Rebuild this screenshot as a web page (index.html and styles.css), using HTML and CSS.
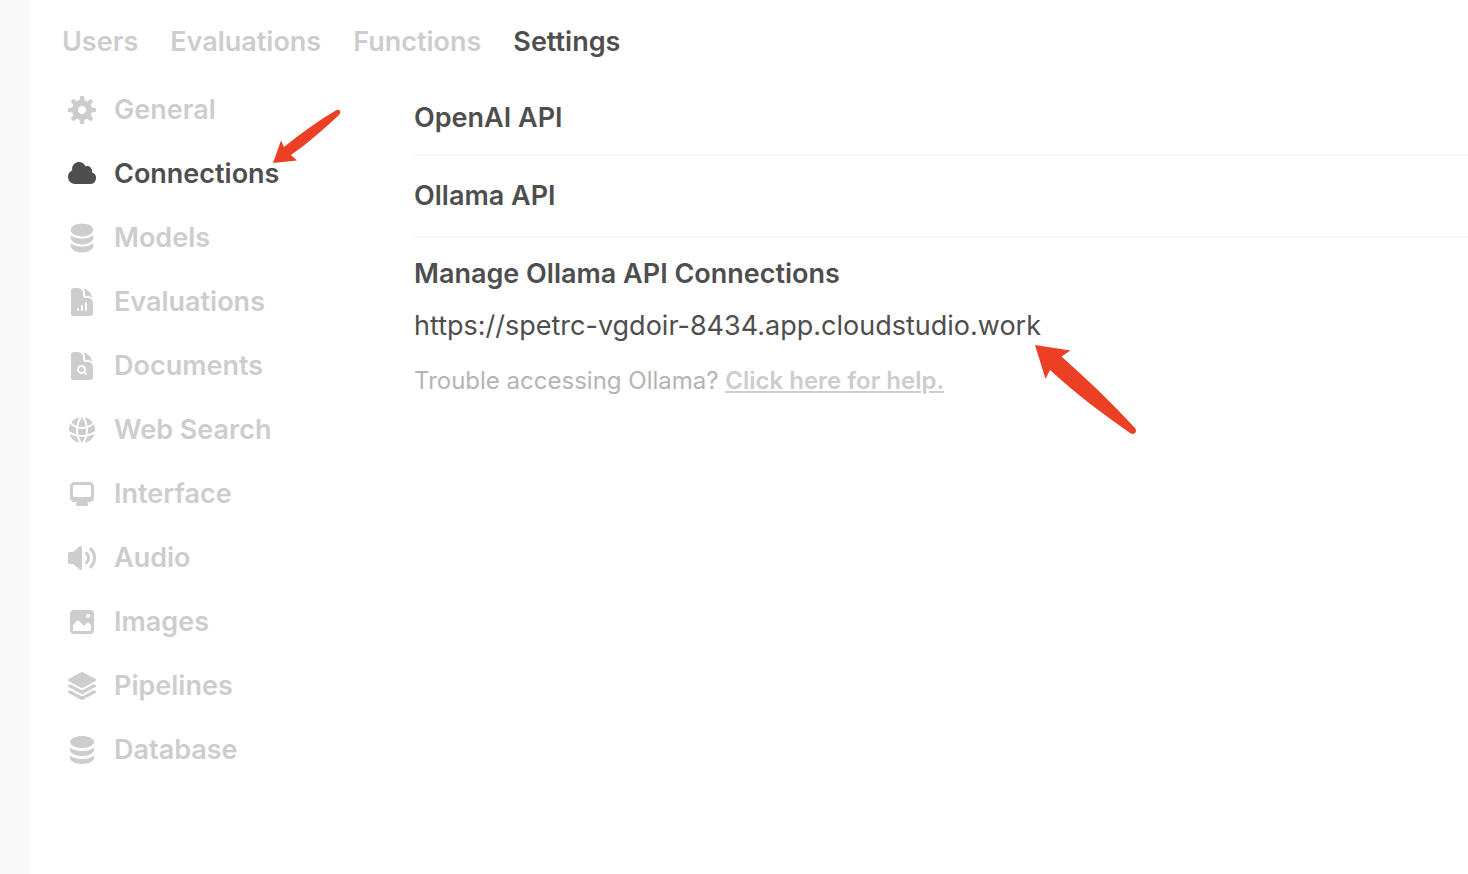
FILE: index.html
```html
<!DOCTYPE html>
<html lang="en">
<head>
    <meta charset="UTF-8">
    <meta name="viewport" content="width=device-width, initial-scale=1.0">
    <title>Admin Settings</title>
    <link rel="stylesheet" href="styles.css">
</head>
<body>
    <div class="sidebar"></div>
    <div class="page">
        <nav class="tabs">
            <a href="#users">Users</a>
            <a href="#evaluations">Evaluations</a>
            <a href="#functions">Functions</a>
            <a href="#settings" class="active">Settings</a>
        </nav>
        <div class="content">
            <div class="menu">
                <button type="button">
                    <svg viewBox="0 0 16 16"><path fill-rule="evenodd" d="M6.955 1.45A.5.5 0 0 1 7.452 1h1.096a.5.5 0 0 1 .497.45l.17 1.699c.484.12.94.312 1.356.562l1.321-1.081a.5.5 0 0 1 .67.033l.774.775a.5.5 0 0 1 .034.67l-1.08 1.32c.25.417.44.873.561 1.357l1.699.17a.5.5 0 0 1 .45.497v1.096a.5.5 0 0 1-.45.497l-1.699.17c-.12.484-.312.94-.562 1.356l1.082 1.322a.5.5 0 0 1-.034.67l-.774.774a.5.5 0 0 1-.67.033l-1.322-1.08c-.416.25-.872.44-1.356.561l-.17 1.699a.5.5 0 0 1-.497.45H7.452a.5.5 0 0 1-.497-.45l-.17-1.699a4.973 4.973 0 0 1-1.356-.562L4.108 13.37a.5.5 0 0 1-.67-.033l-.774-.775a.5.5 0 0 1-.034-.67l1.08-1.32a4.971 4.971 0 0 1-.561-1.357l-1.699-.17A.5.5 0 0 1 1 8.548V7.452a.5.5 0 0 1 .45-.497l1.699-.17c.12-.484.312-.94.562-1.356L2.629 4.107a.5.5 0 0 1 .034-.67l.774-.774a.5.5 0 0 1 .67-.033L5.43 3.71a4.97 4.97 0 0 1 1.356-.561l.17-1.699ZM6 8c0 .538.212 1.026.558 1.385l.057.057a2 2 0 0 0 2.828-2.828l-.058-.056A2 2 0 0 0 6 8Z"/></svg>
                    General
                </button>
                <button type="button" class="active">
                    <svg viewBox="0 0 16 16"><path d="M1 9.5A3.5 3.5 0 0 0 4.5 13H12a3 3 0 0 0 .917-5.857 2.503 2.503 0 0 0-3.198-3.019 3.5 3.5 0 0 0-6.628 2.171A3.5 3.5 0 0 0 1 9.5Z"/></svg>
                    Connections
                    <svg class="arrow arrow-menu" viewBox="0 0 70 56"><path d="M1 54 9 31.500 12 38C28 25 46 12 64.500 1Q67 0 68 2T67 6C52 20 36 34 19 46L25 51.500Z"/></svg>
                </button>
                <button type="button">
                    <svg viewBox="0 0 20 20"><path d="M10 1c3.866 0 7 1.790 7 4s-3.134 4-7 4-7-1.790-7-4 3.134-4 7-4zm5.694 8.130c.464-.264.910-.583 1.306-.952V10c0 2.210-3.134 4-7 4s-7-1.790-7-4V8.178c.396.370.842.688 1.306.953C5.838 10.006 7.854 10.500 10 10.500s4.162-.494 5.694-1.370zM3 13.179V15c0 2.210 3.134 4 7 4s7-1.790 7-4v-1.822c-.396.370-.842.688-1.306.953-1.532.875-3.548 1.369-5.694 1.369s-4.162-.494-5.694-1.370A7.009 7.009 0 0 1 3 13.179z"/></svg>
                    Models
                </button>
                <button type="button">
                    <svg viewBox="0 0 24 24"><path fill-rule="evenodd" d="M5.625 1.500H9a3.750 3.750 0 0 1 3.750 3.750v1.875c0 1.036.840 1.875 1.875 1.875H16.500a3.750 3.750 0 0 1 3.750 3.750v7.875c0 1.035-.840 1.875-1.875 1.875H5.625a1.875 1.875 0 0 1-1.875-1.875V3.375c0-1.036.840-1.875 1.875-1.875ZM9.750 17.250a.75.75 0 0 0-1.500 0V18a.75.75 0 0 0 1.500 0v-.75Zm2.250-3a.75.75 0 0 1 .75.75v3a.75.75 0 0 1-1.500 0v-3a.75.75 0 0 1 .75-.75Zm3.750-1.500a.75.75 0 0 0-1.500 0V18a.75.75 0 0 0 1.500 0v-5.250Z"/><path d="M14.250 5.250a5.230 5.230 0 0 0-1.279-3.434 9.768 9.768 0 0 1 6.963 6.963A5.230 5.230 0 0 0 16.500 7.500h-1.875a.375.375 0 0 1-.375-.375V5.250Z"/></svg>
                    Evaluations
                </button>
                <button type="button">
                    <svg viewBox="0 0 24 24"><path fill-rule="evenodd" d="M5.625 1.500H9a3.750 3.750 0 0 1 3.750 3.750v1.875c0 1.036.840 1.875 1.875 1.875H16.500a3.750 3.750 0 0 1 3.750 3.750v7.875c0 1.035-.840 1.875-1.875 1.875H5.625a1.875 1.875 0 0 1-1.875-1.875V3.375c0-1.036.840-1.875 1.875-1.875ZM11.625 18c.660 0 1.277-.190 1.797-.518l1.048 1.048a.75.75 0 0 0 1.060-1.060l-1.047-1.048A3.375 3.375 0 1 0 11.625 18ZM11.625 16.500a1.875 1.875 0 1 0 0-3.750 1.875 1.875 0 0 0 0 3.750Z"/><path d="M14.250 5.250a5.230 5.230 0 0 0-1.279-3.434 9.768 9.768 0 0 1 6.963 6.963A5.230 5.230 0 0 0 16.500 7.500h-1.875a.375.375 0 0 1-.375-.375V5.250Z"/></svg>
                    Documents
                </button>
                <button type="button">
                    <svg viewBox="0 0 24 24"><path d="M21.721 12.752a9.711 9.711 0 0 0-.945-5.003 12.754 12.754 0 0 1-4.339 2.708 18.991 18.991 0 0 1-.214 4.772 17.165 17.165 0 0 0 5.498-2.477ZM14.634 15.550a17.324 17.324 0 0 0 .332-4.647c-.952.227-1.945.347-2.966.347-1.021 0-2.014-.120-2.966-.347a17.515 17.515 0 0 0 .332 4.647 17.385 17.385 0 0 0 5.268 0ZM9.772 17.119a18.963 18.963 0 0 0 4.456 0A17.182 17.182 0 0 1 12 21.724a17.180 17.180 0 0 1-2.228-4.605ZM7.777 15.230a18.870 18.870 0 0 1-.214-4.774 12.753 12.753 0 0 1-4.340-2.708 9.711 9.711 0 0 0-.944 5.004 17.165 17.165 0 0 0 5.498 2.477ZM21.356 14.752a9.765 9.765 0 0 1-7.478 6.817 18.640 18.640 0 0 0 1.988-4.718 18.627 18.627 0 0 0 5.490-2.098ZM2.644 14.752c1.682.971 3.530 1.688 5.490 2.099a18.640 18.640 0 0 0 1.988 4.718 9.765 9.765 0 0 1-7.478-6.816ZM13.878 2.430a9.755 9.755 0 0 1 6.116 3.986 11.267 11.267 0 0 1-3.746 2.504 18.630 18.630 0 0 0-2.370-6.490ZM12 2.276a17.152 17.152 0 0 1 2.805 7.121c-.897.230-1.837.353-2.805.353-.968 0-1.908-.122-2.805-.353A17.151 17.151 0 0 1 12 2.276ZM10.122 2.430a18.629 18.629 0 0 0-2.370 6.490 11.266 11.266 0 0 1-3.746-2.504 9.754 9.754 0 0 1 6.116-3.985Z"/></svg>
                    Web Search
                </button>
                <button type="button">
                    <svg viewBox="0 0 16 16"><path fill-rule="evenodd" d="M2 4.250A2.250 2.250 0 0 1 4.250 2h7.500A2.250 2.250 0 0 1 14 4.250v5.500A2.250 2.250 0 0 1 11.750 12h-1.312c.1.128.210.248.328.360a.75.75 0 0 1 .234.545v.345a.75.75 0 0 1-.75.75h-4.500a.75.75 0 0 1-.75-.75v-.345a.75.75 0 0 1 .234-.545c.118-.111.228-.232.328-.360H4.250A2.250 2.250 0 0 1 2 9.750v-5.500Zm2.250-.75a.75.75 0 0 0-.75.75v4.500c0 .414.336.75.75.75h7.500a.75.75 0 0 0 .75-.75v-4.500a.75.75 0 0 0-.75-.75h-7.500Z"/></svg>
                    Interface
                </button>
                <button type="button">
                    <svg viewBox="0 0 16 16"><path d="M7.557 2.066A.75.75 0 0 1 8 2.750v10.500a.75.75 0 0 1-1.248.560L3.590 11H2a1 1 0 0 1-1-1V6a1 1 0 0 1 1-1h1.590l3.162-2.810a.75.75 0 0 1 .805-.124ZM12.950 3.050a.75.75 0 1 0-1.060 1.060 5.500 5.500 0 0 1 0 7.780.75.75 0 1 0 1.060 1.060 7 7 0 0 0 0-9.900Z"/><path d="M10.828 5.172a.75.75 0 1 0-1.060 1.060 2.500 2.500 0 0 1 0 3.536.75.75 0 1 0 1.060 1.060 4 4 0 0 0 0-5.656Z"/></svg>
                    Audio
                </button>
                <button type="button">
                    <svg viewBox="0 0 16 16"><path fill-rule="evenodd" d="M2 4a2 2 0 0 1 2-2h8a2 2 0 0 1 2 2v8a2 2 0 0 1-2 2H4a2 2 0 0 1-2-2V4Zm10.500 5.707a.5.5 0 0 0-.146-.353l-1-1a.5.5 0 0 0-.708 0L9.354 9.646a.5.5 0 0 1-.708 0L6.354 7.354a.5.5 0 0 0-.708 0l-2 2a.5.5 0 0 0-.146.353V12a.5.5 0 0 0 .5.5h8a.5.5 0 0 0 .5-.5V9.707ZM12 5a1 1 0 1 1-2 0 1 1 0 0 1 2 0Z"/></svg>
                    Images
                </button>
                <button type="button">
                    <svg viewBox="0 0 24 24"><path d="M11.644 1.590a.75.75 0 0 1 .712 0l9.750 5.250a.75.75 0 0 1 0 1.320l-9.750 5.250a.75.75 0 0 1-.712 0l-9.750-5.250a.75.75 0 0 1 0-1.320l9.750-5.250Z"/><path d="m3.265 10.602 7.668 4.129a2.250 2.250 0 0 0 2.134 0l7.668-4.130 1.370.739a.75.75 0 0 1 0 1.320l-9.750 5.250a.75.75 0 0 1-.710 0l-9.750-5.250a.75.75 0 0 1 0-1.320l1.370-.738Z"/><path d="m10.933 19.231-7.668-4.130-1.370.739a.75.75 0 0 0 0 1.320l9.750 5.250c.221.120.489.120.710 0l9.750-5.250a.75.75 0 0 0 0-1.320l-1.370-.738-7.668 4.130a2.250 2.250 0 0 1-2.134-.001Z"/></svg>
                    Pipelines
                </button>
                <button type="button">
                    <svg viewBox="0 0 16 16"><path d="M8 7c3.314 0 6-1.343 6-3s-2.686-3-6-3-6 1.343-6 3 2.686 3 6 3Z"/><path d="M8 8.500c1.840 0 3.579-.370 4.914-1.037A6.330 6.330 0 0 0 14 6.780V8c0 1.657-2.686 3-6 3S2 9.657 2 8V6.780c.346.273.720.5 1.087.683C4.420 8.131 6.160 8.500 8 8.500Z"/><path d="M8 12.500c1.840 0 3.579-.370 4.914-1.037.366-.183.740-.410 1.086-.684V12c0 1.657-2.686 3-6 3s-6-1.343-6-3v-1.220c.346.273.720.5 1.087.683C4.420 12.131 6.160 12.500 8 12.500Z"/></svg>
                    Database
                </button>
            </div>
            <main class="panel">
                <h2 class="section">OpenAI API</h2>
                <h2 class="section last">Ollama API</h2>
                <h2>Manage Ollama API Connections</h2>
                <div class="url">
                    <span>https://spetrc-vgdoir-8434.app.cloudstudio.work</span>
                    <svg class="arrow arrow-url" viewBox="0 0 104 92"><path d="M1 1 36.500 6.500 27.500 12.500C53 35 78 59 101 84Q103 87 101 89T96 89C69 70 42 50 16 26L11.500 35Z"/></svg>
                </div>
                <p class="help">Trouble accessing Ollama? <a href="#help">Click here for help.</a></p>
            </main>
        </div>
    </div>
</body>
</html>
```

FILE: styles.css
```css
* {
    box-sizing: border-box;
}
body {
    font-family: Inter, "Liberation Sans", sans-serif;
    font-size: 27px;
    font-weight: 600;
    line-height: 40px;
    color: #4e4e4e;
    background: #fff;
    margin: 0;
    display: flex;
    min-height: 100vh;
}
.sidebar {
    width: 30px;
    flex-shrink: 0;
    background: #f9f9f9;
}
.page {
    flex: 1;
    min-width: 0;
    padding: 22px 0 0 32px;
}
.tabs {
    display: flex;
    gap: 32px;
}
.tabs a {
    color: #cdcdcd;
    text-decoration: none;
}
.tabs a.active {
    color: #4e4e4e;
}
.content {
    display: flex;
    padding-top: 16px;
}
.menu {
    width: 352px;
    flex-shrink: 0;
    display: flex;
    flex-direction: column;
    align-items: flex-start;
}
.menu button {
    position: relative;
    display: flex;
    align-items: center;
    gap: 16px;
    height: 64px;
    padding: 0 4px;
    border: none;
    background: none;
    font: inherit;
    color: #cdcdcd;
    cursor: pointer;
}
.menu button.active {
    color: #4e4e4e;
}
.menu svg {
    width: 32px;
    height: 32px;
    fill: currentColor;
}
.panel {
    flex: 1;
    min-width: 0;
    padding-top: 20px;
}
h2 {
    font-size: inherit;
    font-weight: inherit;
    margin: 0;
}
.section {
    padding-bottom: 16px;
    margin-bottom: 20px;
    border-bottom: 2px solid #f7f7f7;
}
.section.last {
    padding-bottom: 20px;
    margin-bottom: 16px;
}
.url {
    position: relative;
    width: fit-content;
    margin-top: 12px;
    font-weight: 400;
}
.help {
    margin: 16px 0 0;
    font-size: 24px;
    line-height: 38px;
    font-weight: 400;
    color: #b4b4b4;
}
.help a {
    color: #cdcdcd;
    font-weight: 600;
    text-decoration: underline;
}
/* red pointers */
svg.arrow {
    position: absolute;
    fill: #eb4026;
}
.menu svg.arrow-menu {
    width: 70px;
    height: 56px;
    left: 210px;
    top: -33px;
}
.arrow-url {
    width: 104px;
    height: 92px;
    left: 620px;
    top: 38px;
}
```
